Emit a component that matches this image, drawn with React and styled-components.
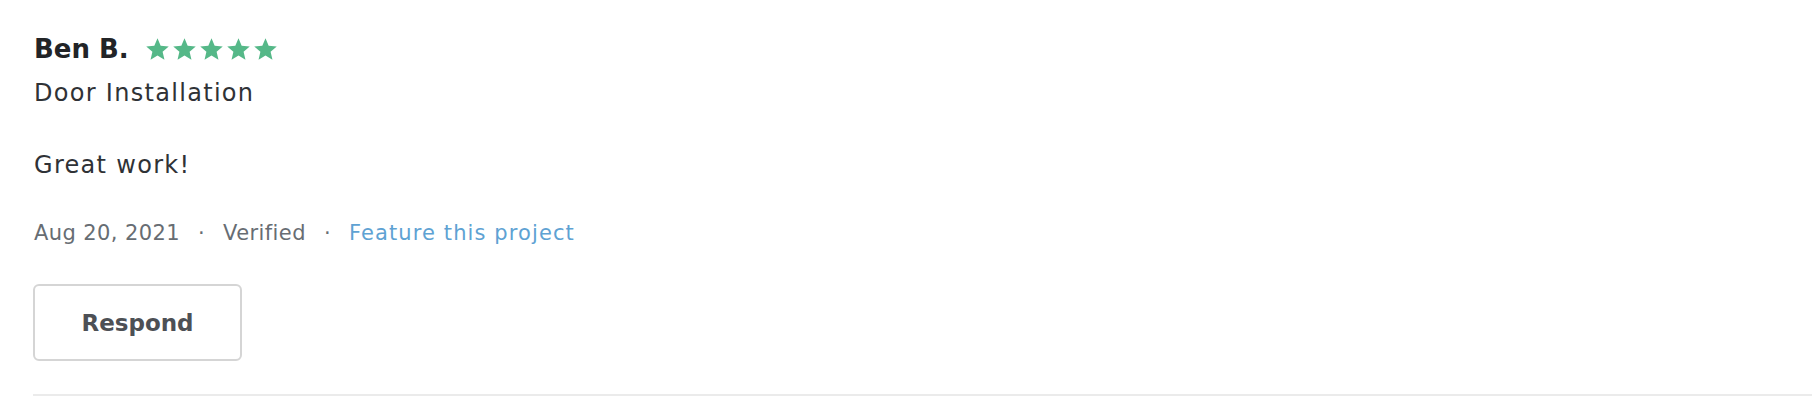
import React from "react";
import styled, { createGlobalStyle } from "styled-components";

const GlobalStyle = createGlobalStyle`
  body {
    margin: 0;
    background: #ffffff;
    font-family: "DejaVu Sans", "Liberation Sans", sans-serif;
  }
`;

const Review = styled.div`
  padding: 33px 0 0 34px;
  display: flex;
  flex-direction: column;
  align-items: flex-start;
`;

const HeaderRow = styled.div`
  display: flex;
  align-items: center;
  height: 32px;
`;

const Name = styled.span`
  font-weight: bold;
  font-size: 26px;
  line-height: 32px;
  color: #222427;
`;

const Stars = styled.div`
  display: flex;
  gap: 0;
  margin-left: 15px;
`;

const Line = styled.p`
  margin: ${props => props.gap}px 0 0;
  font-size: 24px;
  line-height: 30px;
  letter-spacing: 1.3px;
  color: #2f3236;
`;

const Meta = styled.div`
  display: flex;
  align-items: center;
  margin-top: 40px;
  font-size: 21px;
  line-height: 26px;
  letter-spacing: 0.4px;
  color: #676d73;
`;

const Dot = styled.span`
  margin: 0 18px;
`;

const FeatureLink = styled.a`
  color: #5ea2d3;
  text-decoration: none;
  letter-spacing: 1.1px;
  cursor: pointer;
`;

const RespondButton = styled.button`
  margin-top: 38px;
  margin-left: -1px;
  width: 209px;
  height: 77px;
  background: #ffffff;
  border: 2px solid #d5d5d5;
  border-radius: 6px;
  font-family: "DejaVu Sans", "Liberation Sans", sans-serif;
  font-weight: bold;
  font-size: 23px;
  color: #4d5055;
  cursor: pointer;
`;

const Divider = styled.div`
  margin-top: 33px;
  margin-left: -1px;
  align-self: stretch;
  height: 2px;
  background-color: #ebebeb;
`;

const Star = () => (
  <svg width="27" height="27" viewBox="0 0 24 24">
    <path
      fill="#55b888"
      d="M12 17.27L18.18 21l-1.64-7.03L22 9.24l-7.19-.61L12 2 9.19 8.63 2 9.24l5.46 4.73L5.82 21z"
    />
  </svg>
);

const App = () => {
  const rating = 5;

  return (
    <>
      <GlobalStyle />
      <Review>
        <HeaderRow>
          <Name>Ben B.</Name>
          <Stars>
            {Array.from({ length: rating }).map((_, i) => (
              <Star key={i} />
            ))}
          </Stars>
        </HeaderRow>
        <Line gap={13}>Door Installation</Line>
        <Line gap={42}>Great work!</Line>
        <Meta>
          <span>Aug 20, 2021</span>
          <Dot>·</Dot>
          <span>Verified</span>
          <Dot>·</Dot>
          <FeatureLink>Feature this project</FeatureLink>
        </Meta>
        <RespondButton>Respond</RespondButton>
        <Divider />
      </Review>
    </>
  );
};

export default App;
